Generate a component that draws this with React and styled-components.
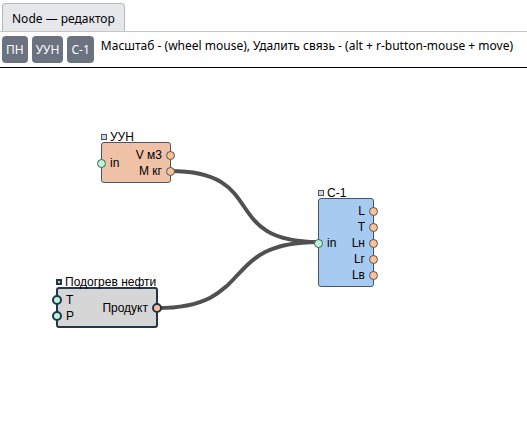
import React from "react";
import styled, { createGlobalStyle } from "styled-components";

const GlobalStyle = createGlobalStyle`
  *, *::before, *::after { box-sizing: border-box; }
  body {
    margin: 0;
    background: #ffffff;
    color: #000000;
    font-family: "Noto Sans", "Open Sans", sans-serif;
    font-size: 12px;
  }
`;

const Page = styled.div`
  display: flex;
  flex-direction: column;
  min-height: 100vh;
  overflow: hidden;
`;

const TabBar = styled.div`
  display: flex;
  padding: 3px 2px 0;
  border-bottom: 1px solid #c4c6c8;
`;

const Tab = styled.button`
  height: 28px;
  padding: 1px 9px 0;
  border: 1px solid #b4b7bc;
  border-bottom: 0;
  border-radius: 4px 4px 0 0;
  background: #e5e7eb;
  color: #000000;
  font: inherit;
`;

const Toolbar = styled.div`
  display: flex;
  align-items: flex-start;
  gap: 4px;
  padding: 4px 2px;
  border-bottom: 1px solid #000000;
`;

const ToolButton = styled.button`
  flex: none;
  height: 27px;
  padding: 0 4px;
  border: 0;
  border-radius: 4px;
  background: #6b7280;
  color: #ffffff;
  font: inherit;
`;

const Hint = styled.span`
  margin-left: 3px;
  line-height: 20px;
  white-space: nowrap;
`;

const Canvas = styled.main`
  position: relative;
  flex: 1;
  min-height: 280px;
  font-family: "Liberation Sans", Arial, sans-serif;
`;

const Links = styled.svg`
  position: absolute;
  inset: 0;
  width: 100%;
  height: 100%;
  fill: none;
  stroke: #505050;
  stroke-width: 4;
`;

const NodeCard = styled.section`
  position: absolute;
  left: ${(p) => p.$x}px;
  top: ${(p) => p.$y}px;
  width: ${(p) => p.$width}px;
  --edge: ${(p) => (p.$selected ? "#24344d" : "#475569")};
  --stroke: ${(p) => (p.$selected ? "2px" : "1px")};
`;

const NodeHeader = styled.header`
  display: flex;
  align-items: center;
  gap: 3px;
  height: 12px;
  margin-bottom: -1px;
  white-space: nowrap;
`;

const NodeHandle = styled.span`
  width: 6px;
  height: 6px;
  border: var(--stroke) solid var(--edge);
  background: #d4d4d4;
`;

const NodeTitle = styled.h2`
  margin: 0;
  font-size: 12px;
  font-weight: 400;
  line-height: 12px;
`;

const NodeBody = styled.div`
  display: flex;
  align-items: center;
  justify-content: space-between;
  padding: calc(5px - var(--stroke)) 0 calc(4px - var(--stroke));
  border: var(--stroke) solid var(--edge);
  border-radius: 3px;
  background: ${(p) => p.$color};
`;

const PortList = styled.ul`
  margin: 0 calc(-4px - var(--stroke));
  padding: 0;
  list-style: none;
`;

const Port = styled.li`
  display: flex;
  flex-direction: ${(p) => (p.$output ? "row-reverse" : "row")};
  align-items: center;
  gap: 4px;
  height: 16px;
  line-height: 16px;
  white-space: nowrap;
`;

const Socket = styled.span`
  width: calc(8px + var(--stroke));
  height: calc(8px + var(--stroke));
  border: var(--stroke) solid var(--edge);
  border-radius: 50%;
  background: ${(p) => (p.$output ? "#ffc090" : "#b5fbd0")};
`;

const nodes = [
  { title: "УУН", x: 101, y: 63, width: 70, color: "#efc2a8", inputs: ["in"], outputs: ["V м3", "М кг"] },
  { title: "С-1", x: 318, y: 119, width: 56, color: "#a6caf0", inputs: ["in"], outputs: ["L", "T", "Lн", "Lг", "Lв"] },
  { title: "Подогрев нефти", x: 56, y: 208, width: 102, color: "#d6d6d6", selected: true, inputs: ["T", "P"], outputs: ["Продукт"] },
];

const links = [
  { from: [170, 103], to: [318, 174] },
  { from: [157, 240], to: [318, 174] },
];

const BEND = 100;

function linkPath({ from: [x1, y1], to: [x2, y2] }) {
  return `M${x1} ${y1} C${x1 + BEND} ${y1} ${x2 - BEND} ${y2} ${x2} ${y2}`;
}

function Ports({ names, output }) {
  return (
    <PortList>
      {names.map((name) => (
        <Port key={name} $output={output}>
          <Socket $output={output} />
          <span>{name}</span>
        </Port>
      ))}
    </PortList>
  );
}

function Node({ node }) {
  return (
    <NodeCard $x={node.x} $y={node.y} $width={node.width} $selected={node.selected}>
      <NodeHeader>
        <NodeHandle />
        <NodeTitle>{node.title}</NodeTitle>
      </NodeHeader>
      <NodeBody $color={node.color}>
        <Ports names={node.inputs} />
        <Ports names={node.outputs} output />
      </NodeBody>
    </NodeCard>
  );
}

export default function App() {
  return (
    <Page>
      <GlobalStyle />
      <TabBar>
        <Tab type="button">Node — редактор</Tab>
      </TabBar>
      <Toolbar>
        <ToolButton type="button">ПН</ToolButton>
        <ToolButton type="button">УУН</ToolButton>
        <ToolButton type="button">С-1</ToolButton>
        <Hint>Масштаб - (wheel mouse), Удалить связь - (alt + r-button-mouse + move)</Hint>
      </Toolbar>
      <Canvas>
        <Links aria-hidden="true">
          {links.map((link) => (
            <path key={linkPath(link)} d={linkPath(link)} />
          ))}
        </Links>
        {nodes.map((node) => (
          <Node key={node.title} node={node} />
        ))}
      </Canvas>
    </Page>
  );
}
